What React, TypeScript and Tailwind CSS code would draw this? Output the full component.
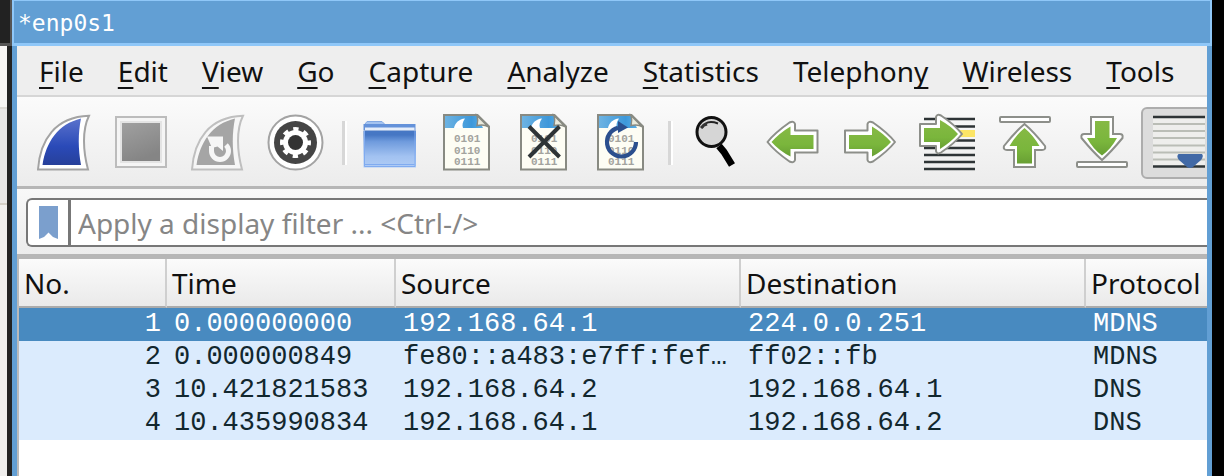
import type { ReactNode } from 'react';

type MenuEntry = { before?: string; key: string; after?: string };

type Packet = {
  no: number;
  time: string;
  source: string;
  destination: string;
  protocol: string;
};

const MENU: MenuEntry[] = [
  { key: 'F', after: 'ile' },
  { key: 'E', after: 'dit' },
  { key: 'V', after: 'iew' },
  { key: 'G', after: 'o' },
  { key: 'C', after: 'apture' },
  { key: 'A', after: 'nalyze' },
  { key: 'S', after: 'tatistics' },
  { before: 'Telephon', key: 'y' },
  { key: 'W', after: 'ireless' },
  { key: 'T', after: 'ools' },
];

const PACKETS: Packet[] = [
  { no: 1, time: '0.000000000', source: '192.168.64.1', destination: '224.0.0.251', protocol: 'MDNS' },
  { no: 2, time: '0.000000849', source: 'fe80::a483:e7ff:fef…', destination: 'ff02::fb', protocol: 'MDNS' },
  { no: 3, time: '10.421821583', source: '192.168.64.2', destination: '192.168.64.1', protocol: 'DNS' },
  { no: 4, time: '10.435990834', source: '192.168.64.1', destination: '192.168.64.2', protocol: 'DNS' },
];

const COLUMNS = ['No.', 'Time', 'Source', 'Destination', 'Protocol'];

const Icon = ({ children }: { children: ReactNode }) => (
  <svg width="56" height="56" viewBox="0 0 56 56" fill="none" className="overflow-visible" aria-hidden="true">
    {children}
  </svg>
);

const FIN_OUTER = 'M2 54.5C4 25 19 2 53 .8C46 15 47 36 52 54.5Z';
const FIN_INNER = 'M6.5 50C10 27 22 9 45 3.5C42 18 42 34 45 50Z';

const StartIcon = () => (
  <Icon>
    <defs>
      <linearGradient id="fin" x1="0" y1="0" x2="0" y2="1">
        <stop offset="0" stopColor="#5a72cc" />
        <stop offset=".6" stopColor="#2a4ab8" />
        <stop offset="1" stopColor="#27409a" />
      </linearGradient>
    </defs>
    <path d={FIN_OUTER} fill="#fff" stroke="#a3a3a3" strokeWidth="2" />
    <path d={FIN_INNER} fill="url(#fin)" />
  </Icon>
);

const StopIcon = () => (
  <Icon>
    <defs>
      <linearGradient id="stop" x1="0" y1="0" x2=".4" y2="1">
        <stop offset="0" stopColor="#a0a0a0" />
        <stop offset="1" stopColor="#858585" />
      </linearGradient>
    </defs>
    <rect x="3" y="2" width="50" height="50" fill="#f5f5f5" stroke="#bcbcbc" strokeWidth="2" />
    <rect x="7" y="6" width="42" height="42" fill="#e4e4e4" />
    <rect x="9" y="8" width="38" height="38" fill="url(#stop)" />
  </Icon>
);

const RestartIcon = () => (
  <Icon>
    <path d={FIN_OUTER} fill="#f6f6f6" stroke="#bfbfbf" strokeWidth="2" />
    <path d={FIN_INNER} fill="#a5a5a5" />
    <path d="M21.5 31V36a8.500 8.500 0 0 0 17 0c0-2.500-1-4.500-2.500-6" stroke="#f6f6f6" strokeWidth="5" />
    <path d="M17 21.500H33V36L27.500 31.500L22 33Z" fill="#f6f6f6" />
  </Icon>
);

const OptionsIcon = () => (
  <Icon>
    <circle cx="28.500" cy="27.500" r="27" fill="#fff" stroke="#a3a3a3" strokeWidth="2" />
    <circle cx="28.500" cy="27.500" r="21.500" fill="#454545" />
    <circle cx="28.500" cy="27.500" r="12.500" fill="#fff" />
    <circle cx="28.500" cy="27.500" r="13.500" stroke="#fff" strokeWidth="4" strokeDasharray="5.300 5.300" strokeDashoffset="2.650" />
    <circle cx="28.500" cy="27.500" r="7.500" fill="#333" />
  </Icon>
);

const OpenIcon = () => (
  <Icon>
    <defs>
      <linearGradient id="folder" x1="0" y1="0" x2="0" y2="1">
        <stop offset="0" stopColor="#4677c4" />
        <stop offset=".12" stopColor="#4677c4" />
        <stop offset=".3" stopColor="#6f9bdd" />
        <stop offset=".7" stopColor="#a2c2f1" />
        <stop offset="1" stopColor="#b0ccf5" />
      </linearGradient>
    </defs>
    <path d="M3 12V9L5 6.500H20L22.500 9V12Z" fill="#a4c3f0" stroke="#83a9e3" />
    <rect x="1.500" y="9" width="52" height="6" fill="#6492da" />
    <rect x="3" y="12.500" width="49.500" height="3" fill="#e6eefa" />
    <rect x="1.500" y="15.500" width="52.500" height="37" fill="url(#folder)" />
    <path d="M2.500 16V51.500H53V16" stroke="#80abf0" />
    <path d="M3 49.500H52.500" stroke="#80abf0" />
  </Icon>
);

const CapturePage = ({ children }: { children?: ReactNode }) => (
  <Icon>
    <defs>
      <linearGradient id="sky" x1="0" y1="0" x2="1" y2="0">
        <stop offset="0" stopColor="#6db3e2" />
        <stop offset=".7" stopColor="#3d98da" />
        <stop offset="1" stopColor="#5aaee6" />
      </linearGradient>
    </defs>
    <path d="M5 0H38.500L50 11.500V54H5Z" fill="#fdfdf4" />
    <path d="M6 1H38L44 13H6Z" fill="url(#sky)" />
    <path d="M15 13C16 8 20 4 26 3.500C23.500 7 23 10 24 13Z" fill="#fff" />
    <text fill="#a3a39e" fontFamily="'Liberation Mono', monospace" fontSize="11" fontWeight="700">
      <tspan x="15" y="27">0101</tspan>
      <tspan x="15" y="38.500">0110</tspan>
      <tspan x="15" y="50">0111</tspan>
    </text>
    <path d="M5 0H38.500L50 11.500V54.500H5Z" stroke="#888a82" strokeWidth="2" />
    <path d="M38 .5L49.500 12C46 9.500 42 9.500 38 10.500C39 7 39 4 38 .5Z" fill="#e9eadc" stroke="#888a82" strokeWidth="1.500" />
    {children}
  </Icon>
);

const CloseFileIcon = () => (
  <CapturePage>
    <path d="M13 11.500L43.500 42M43.500 11.500L13 42" stroke="#2e3436" strokeWidth="4" />
  </CapturePage>
);

const ReloadIcon = () => (
  <CapturePage>
    <path d="M43 27A14.500 14.500 0 1 1 25 12.900" stroke="#2b4f8e" strokeWidth="4.200" />
    <path d="M25 6L35 12.500L25 18Z" fill="#2b4f8e" />
  </CapturePage>
);

const FindIcon = () => (
  <Icon>
    <path d="M31 31L36 37L44 50" stroke="#000" strokeWidth="7" strokeLinejoin="round" />
    <circle cx="23.500" cy="17" r="14.500" fill="#d6d6d6" stroke="#111" strokeWidth="3" />
    <path d="M14 13C17 6.500 23 6 30 8.500" stroke="#222" strokeWidth="2" />
    <path d="M13 13L16 10L19 9" stroke="#333" strokeWidth="3" />
  </Icon>
);

const GREEN = (
  <linearGradient id="green" x1="0" y1="0" x2="0" y2="1">
    <stop offset="0" stopColor="#86b945" />
    <stop offset=".6" stopColor="#7ab63c" />
    <stop offset="1" stopColor="#689f34" />
  </linearGradient>
);

// Points to the right; the previous-packet icon mirrors it.
const Arrow = () => (
  <>
    <path
      d="M3 15.500H25.500V9Q26.500 5.500 31 7.500Q46 18 53 27Q46 36 31 46.500Q26.500 48.500 25.500 45V37.500H3Z"
      fill="#fff"
      stroke="#8d8f8a"
      strokeWidth="2"
      strokeLinejoin="round"
    />
    <path d="M7 20H30V11.500Q41 18 49 27Q41 36 30 41.500V34H7Z" fill="url(#green)" />
  </>
);

const PrevIcon = () => (
  <Icon>
    <defs>{GREEN}</defs>
    <g transform="matrix(-1 0 0 1 55.500 0)">
      <Arrow />
    </g>
  </Icon>
);

const NextIcon = () => (
  <Icon>
    <Arrow />
  </Icon>
);

const GoToIcon = () => (
  <Icon>
    <path
      d="M5 4H56M5 11.500H56M5 25.500H56M5 33H56M5 40H56M5 47H56M5 54H56"
      stroke="#2e3436"
      strokeWidth="2.400"
    />
    <rect x="36" y="15" width="20" height="7" fill="#fce566" />
    <path
      d="M1 9H17V2Q18 -1.500 22 .5Q36 10 43 19Q36 28 22 37.500Q18 40 17 36V31H1Z"
      fill="#fff"
      stroke="#8d8f8a"
      strokeWidth="2"
      strokeLinejoin="round"
    />
    <path d="M5 13H21V5Q32 11 39 19Q32 27 21 34V27H5Z" fill="url(#green)" />
  </Icon>
);

const FirstIcon = () => (
  <Icon>
    <rect x="4" y="2" width="50" height="5" rx="1" fill="#fff" stroke="#8d8f8a" strokeWidth="2" />
    <path
      d="M28.500 9Q38 17 49 31Q50 35 46 35H39V52H18V35H11Q7 35 8 31Q19 17 28.500 9Z"
      fill="#fff"
      stroke="#8d8f8a"
      strokeWidth="2"
    />
    <path d="M28.500 13Q37 20 43.500 31H36V48.500H21V31H13.500Q20 20 28.500 13Z" fill="url(#green)" />
  </Icon>
);

const LastIcon = () => (
  <Icon>
    <rect x="4" y="47" width="50" height="5" rx="1" fill="#fff" stroke="#8d8f8a" strokeWidth="2" />
    <path
      d="M29 45Q38 37 49.500 23Q50.500 18.500 46 19H40V2H18V19H12Q7.500 18.500 8.500 23Q20 37 29 45Z"
      fill="#fff"
      stroke="#8d8f8a"
      strokeWidth="2"
    />
    <path d="M29 40.500Q38 34 44 23H36.500V6H22V23H14Q20 34 29 40.500Z" fill="url(#green)" />
  </Icon>
);

const AutoScrollIcon = () => (
  <Icon>
    <rect x="3" y="1" width="52" height="52" fill="#eeeeec" />
    <path d="M3 9H55M3 16H55M3 23H55M3 30.500H55M3 37.500H55M3 44.500H55" stroke="#babdb6" strokeWidth="2" />
    <path d="M3 2H55M3 51.500H55" stroke="#2e3436" strokeWidth="2.500" />
    <path d="M28.500 39H52Q54 41 51 45L43 52Q40 54 37 52L29 45Q26 41 28.500 39Z" fill="#4169a6" />
  </Icon>
);

const ToolButton = ({ label, pressed, children }: { label: string; pressed?: boolean; children: ReactNode }) => (
  <button
    type="button"
    aria-label={label}
    className={
      pressed
        ? 'flex h-[72px] w-[74px] shrink-0 items-center justify-center rounded-md border-2 border-[#adadad] bg-[#dcdcdc]'
        : 'flex h-[72px] w-[74px] shrink-0 items-center justify-center'
    }
  >
    {children}
  </button>
);

const ToolSeparator = () => (
  <div className="flex h-11 w-[15px] shrink-0 pl-[7px]">
    <div className="w-[5px] border-r-2 border-white bg-[#d7d7d7]" />
  </div>
);

const Toolbar = () => (
  <div className="flex items-center gap-[3px] border-b-3 border-[#b6b6b6] bg-linear-to-b from-[#fbfbfb] to-[#ececec] pt-[10px] pb-[7px] pl-[10px]">
    <ToolButton label="Start capturing packets"><StartIcon /></ToolButton>
    <ToolButton label="Stop capturing packets"><StopIcon /></ToolButton>
    <ToolButton label="Restart current capture"><RestartIcon /></ToolButton>
    <ToolButton label="Capture options"><OptionsIcon /></ToolButton>
    <ToolSeparator />
    <ToolButton label="Open a capture file"><OpenIcon /></ToolButton>
    <ToolButton label="Save this capture file"><CapturePage /></ToolButton>
    <ToolButton label="Close this capture file"><CloseFileIcon /></ToolButton>
    <ToolButton label="Reload this file"><ReloadIcon /></ToolButton>
    <ToolSeparator />
    <ToolButton label="Find a packet"><FindIcon /></ToolButton>
    <ToolButton label="Previous packet"><PrevIcon /></ToolButton>
    <ToolButton label="Next packet"><NextIcon /></ToolButton>
    <ToolButton label="Go to packet"><GoToIcon /></ToolButton>
    <ToolButton label="First packet"><FirstIcon /></ToolButton>
    <ToolButton label="Last packet"><LastIcon /></ToolButton>
    <ToolButton label="Auto scroll" pressed><AutoScrollIcon /></ToolButton>
  </div>
);

const MenuBar = () => (
  <nav className="flex h-[51px] items-center gap-[34px] border-b-2 border-[#d6d6d6] bg-[#eeeeee] pt-px pl-[22px] text-[28px] leading-9 text-[#111111]">
    {MENU.map(({ before, key, after }) => (
      <button key={`${before ?? ''}${key}${after ?? ''}`} type="button" className="whitespace-nowrap">
        {before}
        <span className="underline decoration-2 underline-offset-[5px] [text-decoration-skip-ink:none]">{key}</span>
        {after}
      </button>
    ))}
  </nav>
);

const FilterBar = () => (
  <div className="border-b-5 border-[#b6b6b6] bg-linear-to-b from-[#f8f8f8] to-[#ececec] pt-[9px] pb-[7px] pl-[9px]">
    <div className="flex h-[49px] overflow-hidden rounded-l-md border-2 border-r-0 border-[#777777] bg-white">
      <button
        type="button"
        aria-label="Filter bookmarks"
        className="flex w-[43px] shrink-0 items-center justify-center border-r-3 border-[#777777]"
      >
        <svg width="19" height="33" viewBox="0 0 19 33" aria-hidden="true">
          <path d="M0 0H19V33L14 31L9.500 26.500L5 31L0 33Z" fill="#7b9fcd" />
        </svg>
      </button>
      <input
        type="text"
        aria-label="Display filter"
        placeholder="Apply a display filter ... &lt;Ctrl-/&gt;"
        className="min-w-0 flex-1 pl-[7px] text-[28px] text-black outline-none placeholder:text-[#868686]"
      />
    </div>
  </div>
);

const PacketList = () => (
  <div className="flex-1 border-l-2 border-[#bababa] bg-white">
    <table className="w-full table-fixed border-separate border-spacing-0">
      <colgroup>
        <col className="w-[148px]" />
        <col className="w-[229px]" />
        <col className="w-[345px]" />
        <col className="w-[345px]" />
        <col />
      </colgroup>
      <thead>
        <tr className="h-[49px] bg-linear-to-b from-[#fbfbfb] to-[#e9e9e9] text-[28px] leading-9 text-[#111111]">
          {COLUMNS.map((name) => (
            <th
              key={name}
              scope="col"
              className="border-r-2 border-b-2 border-r-[#cfcfcf] border-b-[#ababab] p-0 pl-[5px] text-left font-normal last:border-r-0"
            >
              {name}
            </th>
          ))}
        </tr>
      </thead>
      <tbody className="font-['Liberation_Mono',monospace] text-[27px] leading-[33px]">
        {PACKETS.map((packet) => (
          <tr
            key={packet.no}
            className={packet.no === 1 ? 'bg-[#488ac0] text-white' : 'bg-[#dbebfd] text-[#12272e]'}
          >
            <td className="p-0 pr-[6px] text-right">{packet.no}</td>
            <td className="p-0 pl-[7px]">{packet.time}</td>
            <td className="overflow-hidden p-0 pl-[7px] whitespace-nowrap">{packet.source}</td>
            <td className="p-0 pl-[7px]">{packet.destination}</td>
            <td className="p-0 pl-[7px]">{packet.protocol}</td>
          </tr>
        ))}
      </tbody>
    </table>
  </div>
);

// Sliver of the windows that sit behind the main one.
const Backdrop = () => (
  <div className="flex w-3 shrink-0 flex-col bg-[#222222]">
    <div className="h-[46px] border-r-2 border-b-3 border-[#555555]" />
    <div className="mr-[5px] h-[63px] border-b-2 border-[#dcdad6] bg-[#f6f5f4]" />
    <div className="mr-[5px] h-24 border-b-2 border-[#d3cfc7] bg-[#e8e7e6]" />
    <div className="mr-[5px] flex-1 bg-[#efeeed]" />
  </div>
);

export default function App() {
  return (
    <div className="flex min-h-screen bg-black font-['Noto_Sans',sans-serif]">
      <Backdrop />
      <main className="mr-3 flex min-w-0 flex-1 flex-col">
        <header className="flex h-[46px] items-center border-2 border-t-1 border-b-3 border-[#8fc7f8] bg-[#629fd4] pt-[2px] pl-1">
          <h1 className="font-['DejaVu_Sans_Mono',monospace] text-[23px] text-white">*enp0s1</h1>
        </header>
        <div className="flex flex-1 flex-col overflow-hidden border-x-5 border-[#629fd4]">
          <MenuBar />
          <Toolbar />
          <FilterBar />
          <PacketList />
        </div>
      </main>
    </div>
  );
}
